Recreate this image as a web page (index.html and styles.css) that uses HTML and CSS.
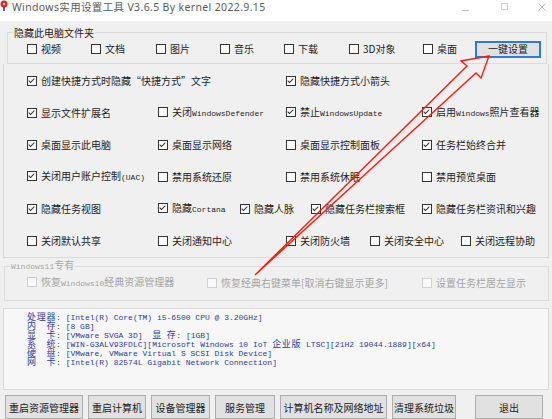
FILE: index.html
```html
<!DOCTYPE html>
<html lang="zh-CN">
<head>
  <meta charset="UTF-8" />
  <title>Windows实用设置工具 V3.6.5</title>
  <link rel="stylesheet" href="styles.css">
</head>
<body>

  <div class="titlebar">
    <svg class="app-icon" width="9" height="11" viewBox="0 0 9 11">
      <circle cx="4" cy="4" r="3.5" fill="#e02020"/>
      <circle cx="4" cy="4" r="1.3" fill="#ffd0d0"/>
      <path d="M4 7 L4 11" stroke="#303060" stroke-width="1.5"/>
    </svg>
    <span class="title">Windows实用设置工具 V3.6.5 By kernel 2022.9.15</span>
    <div class="controls">
      <svg class="ctl-min" width="7" height="8" viewBox="0 0 7 8"><path d="M0 7.5 H7" stroke="#bdbdbd"/></svg>
      <svg class="ctl-max" width="7" height="8" viewBox="0 0 7 8"><rect x="0.5" y="0.5" width="6" height="6" fill="none" stroke="#cfcfcf"/></svg>
      <svg class="ctl-close" width="8" height="8" viewBox="0 0 8 8"><path d="M0.5 0.5 L7.5 7.5 M7.5 0.5 L0.5 7.5" stroke="#bdbdbd"/></svg>
    </div>
  </div>

  <!-- 隐藏此电脑文件夹 -->
  <fieldset class="group folders">
    <legend>隐藏此电脑文件夹</legend>
    <div class="row folder-row">
      <label class="cb"><span class="box"></span>视频</label>
      <label class="cb"><span class="box"></span>文档</label>
      <label class="cb"><span class="box"></span>图片</label>
      <label class="cb"><span class="box"></span>音乐</label>
      <label class="cb"><span class="box"></span>下载</label>
      <label class="cb"><span class="box"></span>3D对象</label>
      <label class="cb"><span class="box"></span>桌面</label>
      <button class="btn default">一键设置</button>
    </div>
  </fieldset>

  <div class="options">
    <div class="row r2">
      <label class="cb"><span class="box on"></span>创建快捷方式时隐藏“快捷方式”文字</label>
      <label class="cb"><span class="box on"></span>隐藏快捷方式小箭头</label>
    </div>
    <div class="row r4">
      <label class="cb"><span class="box on"></span>显示文件扩展名</label>
      <label class="cb"><span class="box"></span>关闭<span class="en">WindowsDefender</span></label>
      <label class="cb"><span class="box on"></span>禁止<span class="en">WindowsUpdate</span></label>
      <label class="cb"><span class="box on"></span>启用<span class="en">Windows</span>照片查看器</label>
    </div>
    <div class="row r4">
      <label class="cb"><span class="box on"></span>桌面显示此电脑</label>
      <label class="cb"><span class="box on"></span>桌面显示网络</label>
      <label class="cb"><span class="box"></span>桌面显示控制面板</label>
      <label class="cb"><span class="box on"></span>任务栏始终合并</label>
    </div>
    <div class="row r4">
      <label class="cb"><span class="box on"></span>关闭用户账户控制<span class="en">(UAC)</span></label>
      <label class="cb"><span class="box"></span>禁用系统还原</label>
      <label class="cb"><span class="box"></span>禁用系统休眠</label>
      <label class="cb"><span class="box"></span>禁用预览桌面</label>
    </div>
    <div class="row r5">
      <label class="cb"><span class="box on"></span>隐藏任务视图</label>
      <label class="cb"><span class="box on"></span>隐藏<span class="en">Cortana</span></label>
      <label class="cb"><span class="box on"></span>隐藏人脉</label>
      <label class="cb"><span class="box on"></span>隐藏任务栏搜索框</label>
      <label class="cb"><span class="box on"></span>隐藏任务栏资讯和兴趣</label>
    </div>
    <div class="row r6">
      <label class="cb"><span class="box"></span>关闭默认共享</label>
      <label class="cb"><span class="box"></span>关闭通知中心</label>
      <label class="cb"><span class="box"></span>关闭防火墙</label>
      <label class="cb"><span class="box"></span>关闭安全中心</label>
      <label class="cb"><span class="box"></span>关闭远程协助</label>
    </div>
  </div>

  <!-- Windows11 only -->
  <fieldset class="group win11">
    <legend><span class="en">Windows11</span>专有</legend>
    <div class="row win11-row">
      <label class="cb off"><span class="box"></span>恢复<span class="en">Windows10</span>经典资源管理器</label>
      <label class="cb off"><span class="box"></span>恢复经典右键菜单[取消右键显示更多]</label>
      <label class="cb off"><span class="box"></span>设置任务栏居左显示</label>
    </div>
  </fieldset>

  <div class="info">
    <div><span class="k">处理器</span>: [Intel(R) Core(TM) i5-6500 CPU @ 3.20GHz]</div>
    <div><span class="k">内　存</span>: [8 GB]</div>
    <div><span class="k">显　卡</span>: [VMware SVGA 3D]  <span class="k">显</span> <span class="k">存</span>: [1GB]</div>
    <div><span class="k">系　统</span>: [WIN-G3ALV93FDLC][Microsoft Windows 10 IoT <span class="k">企业版</span> LTSC][21H2 19044.1889][x64]</div>
    <div><span class="k">硬　盘</span>: [VMware, VMware Virtual S SCSI Disk Device]</div>
    <div><span class="k">网　卡</span>: [Intel(R) 82574L Gigabit Network Connection]</div>
  </div>

  <div class="actions">
    <button class="btn w78">重启资源管理器</button>
    <button class="btn w58">重启计算机</button>
    <button class="btn w59">设备管理器</button>
    <button class="btn w60">服务管理</button>
    <button class="btn w107">计算机名称及网络地址</button>
    <button class="btn w64">清理系统垃圾</button>
    <button class="btn exit">退出</button>
  </div>

  <!-- red annotation arrow drawn over the window -->
  <svg class="arrow" width="552" height="419" viewBox="0 0 552 419">
    <polygon points="255,275 467,66 461,61 489,56 481,78 476,73" fill="none" stroke="#ff1e0e" stroke-width="1.4" stroke-linejoin="miter"/>
  </svg>

</body>
</html>
```

FILE: styles.css
```css
body {
  margin: 0;
  width: 552px;
  height: 419px;
  overflow: hidden;
  position: relative;
  background: #f0f0f0;
  font-family: "Noto Sans CJK SC", sans-serif;
  font-size: 10px;
  color: #1e1e1e;
}

.titlebar {
  height: 21px;
  background: #fff;
  display: flex;
  align-items: flex-start;
}

.app-icon {
  margin-right: 3px;
}

.title {
  font-family: "Noto Sans", "Noto Sans CJK SC", sans-serif;
  font-size: 10.5px;
  letter-spacing: 0.35px;
  line-height: 14px;
  color: #5a5a5a;
}

.controls {
  margin-left: auto;
  padding: 3px 6px 0 0;
  display: flex;
}

.ctl-min { margin-right: 32px; }
.ctl-max { margin-right: 30px; }

/* group boxes */
.group {
  border: 1px solid #dcdcdc;
  padding: 0;
  min-width: 0;
}

.group legend {
  line-height: 11px;
  padding: 0 1px;
  margin-left: 5px;
}

.folders {
  margin: 6px 5px 0 7px;
}

.folder-row {
  height: 18px;
  margin: 2px 0 5px;
  padding-left: 19px;
  grid-template-columns: 64px 65px 64px 64px 65px 74px 52px auto;
}

.row {
  display: grid;
  align-items: center;
}

.options {
  margin: 0 3px 0 3px;
  border: 1px solid #dadada;
  border-top: none;
  padding-top: 1px;
}

.options .row {
  height: 32px;
  padding-left: 23px;
}

.r2 { grid-template-columns: 259px 1fr; }
.r4 { grid-template-columns: 131px 128px 136px 1fr; }
.r5 { grid-template-columns: 131px 82px 71px 111px 1fr; }
.r6 { grid-template-columns: 131px 128px 84px 91px 1fr; }

.win11 {
  margin: 2px 3px 0 4px;
}

.win11 legend {
  color: #a8a8a8;
  line-height: 10px;
}

.win11-row {
  height: 20px;
  margin: 1px 0 7px;
  padding-left: 22px;
  grid-template-columns: 180px 215px 1fr;
}

/* checkboxes */
.cb {
  display: block;
  white-space: nowrap;
  line-height: 12px;
}

.box {
  display: inline-block;
  vertical-align: -1px;
  margin-right: 4px;
  width: 8px;
  height: 8px;
  border: 1px solid #333;
  background: #fff;
  position: relative;
}

.box.on::after {
  content: "";
  position: absolute;
  left: 2px;
  top: 0;
  width: 2px;
  height: 5px;
  border: solid #333;
  border-width: 0 1px 1px 0;
  transform: rotate(45deg);
}

.cb.off {
  color: #a5a5a5;
}

.cb.off .box {
  border-color: #d0d0d0;
  background: #f9f9f9;
}

.en {
  font-family: "Liberation Mono", monospace;
  font-size: 8px;
}

/* buttons */
.btn {
  font-family: "Noto Sans CJK SC", sans-serif;
  font-size: 10px;
  color: #222;
  background: #e1e1e1;
  border: 1px solid #adadad;
  padding: 0;
  height: 24px;
}

.btn.default {
  width: 66px;
  height: 17px;
  border: 2px solid #2b7cd3;
  line-height: 12px;
}

/* system info */
.info {
  margin: 7px 3px 0 3px;
  height: 77px;
  padding: 3px 0 0 23px;
  background: #f7f7f7;
  border: 1px solid #dcdcdc;
  font-family: "Liberation Mono", monospace;
  font-size: 8px;
  color: #2a3f9c;
}

.info div {
  height: 9px;
  line-height: 9px;
  white-space: pre;
}

.info .k {
  font-family: "Noto Sans CJK SC", sans-serif;
  font-size: 9px;
  letter-spacing: 0.7px;
}

.actions {
  margin-top: 5px;
  padding-left: 5px;
  display: flex;
  gap: 5px;
}

.w78 { width: 78px; }
.w58 { width: 58px; }
.w59 { width: 59px; }
.w60 { width: 60px; }
.w107 { width: 107px; }
.w64 { width: 64px; }

.btn.exit {
  width: 68px;
  margin-left: auto;
  margin-right: 9px;
}

.arrow {
  position: absolute;
  left: 0;
  top: 0;
  pointer-events: none;
}
```
